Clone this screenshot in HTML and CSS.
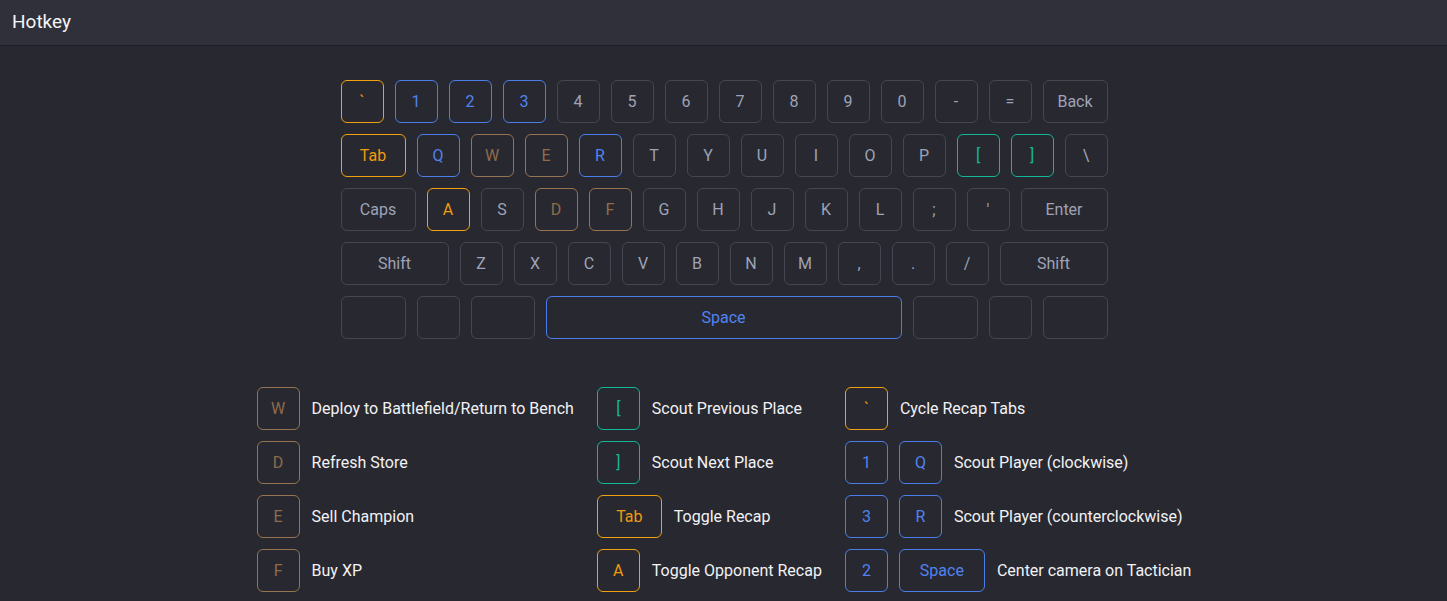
FILE: index.html
```html
<!DOCTYPE html>
<html>
<head>
<meta charset="utf-8">
<link rel="stylesheet" href="styles.css">
</head>
<body>
<header class="topbar"><span class="title">Hotkey</span></header>
<main class="content">
  <section class="keyboard">
    <div class="row">
      <div class="key orange">`</div>
      <div class="key blue">1</div>
      <div class="key blue">2</div>
      <div class="key blue">3</div>
      <div class="key">4</div>
      <div class="key">5</div>
      <div class="key">6</div>
      <div class="key">7</div>
      <div class="key">8</div>
      <div class="key">9</div>
      <div class="key">0</div>
      <div class="key">-</div>
      <div class="key">=</div>
      <div class="key w65">Back</div>
    </div>
    <div class="row">
      <div class="key w65 orange">Tab</div>
      <div class="key blue">Q</div>
      <div class="key brown">W</div>
      <div class="key brown">E</div>
      <div class="key blue">R</div>
      <div class="key">T</div>
      <div class="key">Y</div>
      <div class="key">U</div>
      <div class="key">I</div>
      <div class="key">O</div>
      <div class="key">P</div>
      <div class="key teal">[</div>
      <div class="key teal">]</div>
      <div class="key">\</div>
    </div>
    <div class="row">
      <div class="key w75">Caps</div>
      <div class="key orange">A</div>
      <div class="key">S</div>
      <div class="key brown">D</div>
      <div class="key brown">F</div>
      <div class="key">G</div>
      <div class="key">H</div>
      <div class="key">J</div>
      <div class="key">K</div>
      <div class="key">L</div>
      <div class="key">;</div>
      <div class="key">'</div>
      <div class="key w87">Enter</div>
    </div>
    <div class="row">
      <div class="key w108">Shift</div>
      <div class="key">Z</div>
      <div class="key">X</div>
      <div class="key">C</div>
      <div class="key">V</div>
      <div class="key">B</div>
      <div class="key">N</div>
      <div class="key">M</div>
      <div class="key">,</div>
      <div class="key">.</div>
      <div class="key">/</div>
      <div class="key w108">Shift</div>
    </div>
    <div class="row">
      <div class="key w65"></div>
      <div class="key"></div>
      <div class="key w64"></div>
      <div class="key space blue">Space</div>
      <div class="key w65"></div>
      <div class="key"></div>
      <div class="key w65"></div>
    </div>
  </section>

  <section class="legend">
    <div class="col">
      <div class="item"><div class="key brown">W</div><span class="desc">Deploy to Battlefield/Return to Bench</span></div>
      <div class="item"><div class="key brown">D</div><span class="desc">Refresh Store</span></div>
      <div class="item"><div class="key brown">E</div><span class="desc">Sell Champion</span></div>
      <div class="item"><div class="key brown">F</div><span class="desc">Buy XP</span></div>
    </div>
    <div class="col">
      <div class="item"><div class="key teal">[</div><span class="desc">Scout Previous Place</span></div>
      <div class="item"><div class="key teal">]</div><span class="desc">Scout Next Place</span></div>
      <div class="item"><div class="key w65 orange">Tab</div><span class="desc">Toggle Recap</span></div>
      <div class="item"><div class="key orange">A</div><span class="desc">Toggle Opponent Recap</span></div>
    </div>
    <div class="col">
      <div class="item"><div class="key orange">`</div><span class="desc">Cycle Recap Tabs</span></div>
      <div class="item"><div class="key blue">1</div><div class="key blue">Q</div><span class="desc">Scout Player (clockwise)</span></div>
      <div class="item"><div class="key blue">3</div><div class="key blue">R</div><span class="desc">Scout Player (counterclockwise)</span></div>
      <div class="item"><div class="key blue">2</div><div class="key w86 blue">Space</div><span class="desc">Center camera on Tactician</span></div>
    </div>
  </section>
</main>
</body>
</html>
```

FILE: styles.css
```css
html, body {
  margin: 0;
  padding: 0;
  background: #282830;
  font-family: Roboto, "Liberation Sans", Arial, sans-serif;
  height: 100%;
  overflow: hidden;
}

.topbar {
  height: 45px;
  background: #30303a;
  border-bottom: 1px solid #1e1e24;
  display: flex;
  align-items: center;
  padding-left: 12px;
  box-sizing: content-box;
}

.title {
  color: #f4f4f6;
  font-size: 19px;
  font-weight: 400;
  position: relative;
  top: -1px;
}

.content {
  display: flex;
  flex-direction: column;
  align-items: center;
  padding-top: 34px;
  padding-left: 1px;
}

.keyboard {
  width: 767px;
  display: flex;
  flex-direction: column;
  gap: 11px;
}

.row {
  display: flex;
  gap: 11px;
}

.key {
  box-sizing: border-box;
  width: 43px;
  height: 43px;
  flex: none;
  border: 1px solid #464652;
  border-radius: 6px;
  display: flex;
  align-items: center;
  justify-content: center;
  color: #9ea3b6;
  font-size: 16px;
}

.w64 { width: 64px; }
.w65 { width: 65px; }
.w75 { width: 75px; }
.w86 { width: 86px; }
.w87 { width: 87px; }
.w108 { width: 108px; }
.space { flex: 1; }

.orange { border-color: #f0a010; color: #f09a10; }
.blue { border-color: #4b7ee8; color: #5083f0; }
.brown { border-color: #96744f; color: #8e6c4b; }
.teal { border-color: #12b698; color: #14b898; }

.legend {
  display: flex;
  gap: 23px;
  margin-top: 48px;
}

.col {
  display: flex;
  flex-direction: column;
  gap: 11px;
}

.item {
  display: flex;
  align-items: center;
  gap: 11px;
}

.desc {
  color: #f2f2f4;
  font-size: 16px;
  margin-left: 1px;
  white-space: nowrap;
}
```
